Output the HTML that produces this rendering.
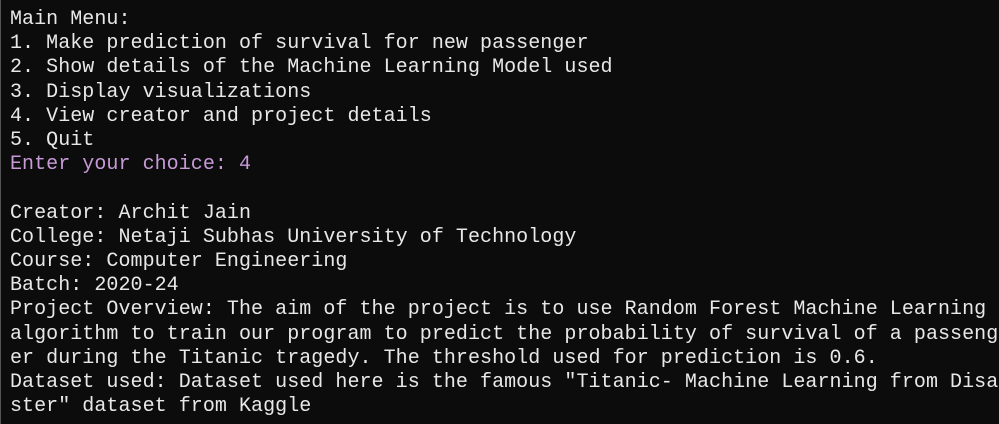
<!DOCTYPE html>
<html><head><style>
html,body{margin:0;padding:0;background:#0c0c0c;width:999px;height:424px;overflow:hidden}
body{border-left:1px solid #555;box-sizing:border-box}
pre{margin:0;padding:8px 0 0 9px;font-family:"Liberation Mono",monospace;font-size:20px;line-height:24.2px;color:#e8e8e8;letter-spacing:0.05px;white-space:pre}
.p{color:#c79ad8}
</style></head><body><pre>Main Menu:
1. Make prediction of survival for new passenger
2. Show details of the Machine Learning Model used
3. Display visualizations
4. View creator and project details
5. Quit
<span class="p">Enter your choice: 4</span>

Creator: Archit Jain
College: Netaji Subhas University of Technology
Course: Computer Engineering
Batch: 2020-24
Project Overview: The aim of the project is to use Random Forest Machine Learning
algorithm to train our program to predict the probability of survival of a passeng
er during the Titanic tragedy. The threshold used for prediction is 0.6.
Dataset used: Dataset used here is the famous "Titanic- Machine Learning from Disa
ster" dataset from Kaggle</pre></body></html>
